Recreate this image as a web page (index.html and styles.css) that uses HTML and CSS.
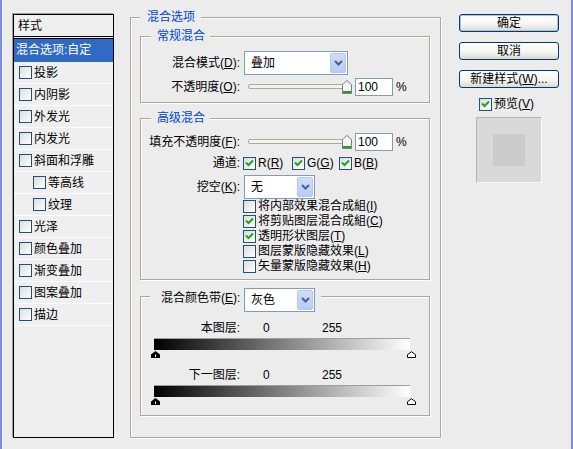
FILE: index.html
```html
<!DOCTYPE html>
<html lang="zh-CN">
<head>
<meta charset="utf-8">
<title>图层样式</title>
<link rel="stylesheet" href="styles.css">
</head>
<body>
<div class="dialog">
  <div class="styles-panel">
    <div class="sp-head">样式</div>
    <div class="sp-item selected">混合选项:自定</div>
    <div class="sp-item"><span class="cb"></span>投影</div>
    <div class="sp-item"><span class="cb"></span>内阴影</div>
    <div class="sp-item"><span class="cb"></span>外发光</div>
    <div class="sp-item"><span class="cb"></span>内发光</div>
    <div class="sp-item"><span class="cb"></span>斜面和浮雕</div>
    <div class="sp-item sub"><span class="cb"></span>等高线</div>
    <div class="sp-item sub"><span class="cb"></span>纹理</div>
    <div class="sp-item"><span class="cb"></span>光泽</div>
    <div class="sp-item"><span class="cb"></span>颜色叠加</div>
    <div class="sp-item"><span class="cb"></span>渐变叠加</div>
    <div class="sp-item"><span class="cb"></span>图案叠加</div>
    <div class="sp-item"><span class="cb"></span>描边</div>
  </div>

  <fieldset class="grp main">
    <legend>混合选项</legend>

    <fieldset class="grp inner g-normal">
      <legend>常规混合</legend>
      <div class="row r-mode">
        <span class="lbl">混合模式(<u>D</u>):</span>
        <div class="combo w-mode"><span class="combo-val">叠加</span><span class="combo-btn"><svg width="9" height="6" viewBox="0 0 9 6"><path d="M1 1 L4.5 4.5 L8 1" fill="none" stroke="#4d6185" stroke-width="2"/></svg></span></div>
      </div>
      <div class="row r-slide">
        <span class="lbl">不透明度(<u>O</u>):</span>
        <div class="slider"><div class="track"></div><svg class="thumb" width="10" height="14" viewBox="0 0 10 14"><path d="M0.5 4.5 L5 0.5 L9.5 4.5 V13.5 H0.5 Z" fill="#f6f6f2" stroke="#7c7c7c"/><path d="M1 11.5 H9 M1 12.5 H9" stroke="#21a121"/></svg></div>
        <span class="num">100</span><span class="pct">%</span>
      </div>
    </fieldset>

    <fieldset class="grp inner g-adv">
      <legend>高级混合</legend>
      <div class="row r-fill">
        <span class="lbl">填充不透明度(<u>F</u>):</span>
        <div class="slider"><div class="track"></div><svg class="thumb" width="10" height="14" viewBox="0 0 10 14"><path d="M0.5 4.5 L5 0.5 L9.5 4.5 V13.5 H0.5 Z" fill="#f6f6f2" stroke="#7c7c7c"/><path d="M1 11.5 H9 M1 12.5 H9" stroke="#21a121"/></svg></div>
        <span class="num">100</span><span class="pct">%</span>
      </div>
      <div class="row r-chan">
        <span class="lbl">通道:</span>
        <span class="chk ch-r"><span class="cb"><svg width="11" height="11" viewBox="0 0 11 11"><path d="M2 4.5 L4.5 7 L9 2.5" fill="none" stroke="#21a121" stroke-width="2"/></svg></span>R(<u>R</u>)</span>
        <span class="chk ch-g"><span class="cb"><svg width="11" height="11" viewBox="0 0 11 11"><path d="M2 4.5 L4.5 7 L9 2.5" fill="none" stroke="#21a121" stroke-width="2"/></svg></span>G(<u>G</u>)</span>
        <span class="chk ch-b"><span class="cb"><svg width="11" height="11" viewBox="0 0 11 11"><path d="M2 4.5 L4.5 7 L9 2.5" fill="none" stroke="#21a121" stroke-width="2"/></svg></span>B(<u>B</u>)</span>
      </div>
      <div class="row r-knock">
        <span class="lbl">挖空(<u>K</u>):</span>
        <div class="combo w-small"><span class="combo-val">无</span><span class="combo-btn"><svg width="9" height="6" viewBox="0 0 9 6"><path d="M1 1 L4.5 4.5 L8 1" fill="none" stroke="#4d6185" stroke-width="2"/></svg></span></div>
      </div>
      <div class="cblist">
        <div class="chk-row"><span class="cb"></span>将内部效果混合成組(<u>I</u>)</div>
        <div class="chk-row"><span class="cb"><svg width="11" height="11" viewBox="0 0 11 11"><path d="M2 4.5 L4.5 7 L9 2.5" fill="none" stroke="#21a121" stroke-width="2"/></svg></span>将剪贴图层混合成組(<u>C</u>)</div>
        <div class="chk-row"><span class="cb"><svg width="11" height="11" viewBox="0 0 11 11"><path d="M2 4.5 L4.5 7 L9 2.5" fill="none" stroke="#21a121" stroke-width="2"/></svg></span>透明形状图层(<u>T</u>)</div>
        <div class="chk-row"><span class="cb"></span>图层蒙版隐藏效果(<u>L</u>)</div>
        <div class="chk-row"><span class="cb"></span>矢量蒙版隐藏效果(<u>H</u>)</div>
      </div>
    </fieldset>

    <fieldset class="grp inner g-band">
      <legend><div class="lg-band"><span class="lg-lbl">混合颜色带(<u>E</u>):</span><div class="combo w-small"><span class="combo-val">灰色</span><span class="combo-btn"><svg width="9" height="6" viewBox="0 0 9 6"><path d="M1 1 L4.5 4.5 L8 1" fill="none" stroke="#4d6185" stroke-width="2"/></svg></span></div></div></legend>
      <div class="row r-layer first">
        <span class="lbl">本图层:</span><span class="v0">0</span><span class="v1">255</span>
      </div>
      <div class="gbar"></div>
      <div class="markers">
        <svg width="9" height="7" viewBox="0 0 9 7"><path d="M4.5 0 L9 3.5 V7 H0 V3.5 Z" fill="#000"/><path d="M4.5 3.5 V6" stroke="#fff"/></svg>
        <svg width="9" height="7" viewBox="0 0 9 7"><path d="M4.5 0.7 L8.5 3.7 V6.5 H0.5 V3.7 Z" fill="#fff" stroke="#000"/></svg>
      </div>
      <div class="row r-layer">
        <span class="lbl">下一图层:</span><span class="v0">0</span><span class="v1">255</span>
      </div>
      <div class="gbar"></div>
      <div class="markers">
        <svg width="9" height="7" viewBox="0 0 9 7"><path d="M4.5 0 L9 3.5 V7 H0 V3.5 Z" fill="#000"/><path d="M4.5 3.5 V6" stroke="#fff"/></svg>
        <svg width="9" height="7" viewBox="0 0 9 7"><path d="M4.5 0.7 L8.5 3.7 V6.5 H0.5 V3.7 Z" fill="#fff" stroke="#000"/></svg>
      </div>
    </fieldset>
  </fieldset>

  <div class="side">
    <div class="btn default">确定</div>
    <div class="btn">取消</div>
    <div class="btn last">新建样式(<u>W</u>)...</div>
    <div class="preview-row"><span class="cb"><svg width="11" height="11" viewBox="0 0 11 11"><path d="M2 4.5 L4.5 7 L9 2.5" fill="none" stroke="#21a121" stroke-width="2"/></svg></span>预览(<u>V</u>)</div>
    <div class="preview"><div class="preview-inner"></div></div>
  </div>
</div>
</body>
</html>
```

FILE: styles.css
```css
* { box-sizing: border-box; }
html, body { margin: 0; padding: 0; }
body {
  width: 573px;
  height: 449px;
  overflow: hidden;
  background: #ececec;
  border-left: 2px solid #7d8cdd;
  border-right: 2px solid #7d8cdd;
  font-family: "Liberation Sans", "Noto Sans CJK SC", sans-serif;
  font-size: 12px;
  line-height: 14px;
  color: #000;
}
u { text-decoration: underline; text-underline-offset: 1px; }

.dialog { display: flex; align-items: flex-start; }

/* left styles list */
.styles-panel {
  margin: 14px 0 0 11px;
  width: 101px;
  height: 424px;
  border: 1px solid #000;
  box-shadow: -1px -1px 0 #a0a0a0;
  background: #efefef;
}
.sp-head {
  height: 24px;
  line-height: 22px;
  padding-left: 4px;
  border-bottom: 3px double #000;
}
.sp-item {
  display: flex;
  align-items: center;
  height: 22px;
  line-height: 22px;
  padding-left: 5px;
  border-bottom: 1px solid #fff;
  white-space: nowrap;
}
.sp-item.selected {
  height: 23px;
  padding-left: 2px;
  background: #316ac5;
  color: #fff;
  border-bottom-color: #316ac5;
}
.sp-item.sub { padding-left: 19px; }

/* checkbox */
.cb {
  display: inline-flex;
  align-items: center;
  justify-content: center;
  width: 13px;
  height: 13px;
  flex-shrink: 0;
  border: 1px solid #1c5180;
  background: linear-gradient(135deg, #dcdcd7, #ffffff);
  margin-right: 2px;
}
.cb svg { display: block; }

/* group boxes */
fieldset {
  margin: 0;
  padding: 0;
  min-width: 0;
  border: 1px solid #aca899;
  box-shadow: inset 1px 1px 0 #fff, 1px 1px 0 #fff;
}
legend {
  padding: 0;
  font-size: 12px;
  line-height: 14px;
  color: #0046d5;
  background: #ececec;
}
.main {
  margin: 10px 0 0 16px;
  width: 311px;
  padding: 0 10px 21px 9px;
}
.main > legend { margin-left: 0; padding: 0 6px 0 7px; }
.inner { width: 290px; }
.inner > legend { margin-left: 10px; padding: 0 5px 0 6px; }
.g-normal { margin-top: 5px; padding-bottom: 6px; }
.g-adv { margin-top: 8px; padding-bottom: 5px; }
.g-band { margin-top: 8px; padding-bottom: 10px; }
.g-band > legend { margin-left: 9px; padding: 0 6px 0 11px; color: #000; }

.row { display: flex; align-items: center; white-space: nowrap; }
.lbl { width: 99px; flex-shrink: 0; text-align: right; }

.r-mode { margin-top: 8px; height: 24px; }
.r-slide { margin-top: 3px; height: 18px; }
.r-fill { margin-top: 8px; height: 18px; }
.r-chan { margin-top: 5px; height: 15px; line-height: 15px; }
.r-knock { margin-top: 4px; height: 24px; }

/* combo box */
.combo {
  display: flex;
  height: 24px;
  margin-left: 4px;
  border: 1px solid #7f9db9;
  background: #fff;
  flex-shrink: 0;
}
.w-mode { width: 104px; }
.w-small { width: 71px; }
.combo-val {
  flex: 1;
  padding-left: 6px;
  line-height: 23px;
  color: #000;
}
.combo-btn {
  width: 16px;
  margin: 1px 1px 1px 0;
  display: flex;
  align-items: center;
  justify-content: center;
  border: 1px solid #b5c8f4;
  border-radius: 2px;
  background: linear-gradient(#cfdcfc, #b7cbf8);
}

/* slider */
.slider {
  position: relative;
  width: 103px;
  height: 18px;
  margin-left: 8px;
  flex-shrink: 0;
}
.track {
  width: 98px;
  height: 5px;
  margin-top: 6px;
  border: 1px solid #aaa9a0;
  border-radius: 2px;
  background: #f3f2ec;
}
.thumb { position: absolute; left: 94px; top: 2px; display: block; }
.num {
  width: 38px;
  height: 18px;
  margin-left: 4px;
  padding-left: 2px;
  line-height: 17px;
  border: 1px solid #7f9db9;
  background: #fff;
}
.pct { margin-left: 3px; }

/* channels */
.chk { display: inline-flex; align-items: center; }
.ch-r { margin-left: 3px; width: 49px; }
.ch-g { width: 47px; }

.cblist { margin-left: 102px; }
.chk-row {
  display: flex;
  align-items: center;
  height: 15px;
  line-height: 15px;
  white-space: nowrap;
}

/* blend band */
.lg-band { display: flex; align-items: flex-start; height: 16px; }
.lg-lbl { width: 83px; line-height: 21px; white-space: nowrap; }
.lg-band .combo { margin-left: 0; }

.r-layer { margin-top: 10px; height: 14px; line-height: 15px; }
.r-layer.first { margin-top: 17px; }
.v0 { width: 59px; margin-left: 23px; }
.gbar {
  margin: 3px 0 0 13px;
  width: 256px;
  height: 12px;
  border-top: 1px solid #a0a0a0;
  background: linear-gradient(to right, #000, #fff);
}
.markers {
  display: flex;
  justify-content: space-between;
  margin: 1px 0 0 10px;
  width: 265px;
  height: 7px;
}
.markers svg { display: block; }

/* right column */
.side {
  margin: 14px 0 0 18px;
  width: 100px;
  display: flex;
  flex-direction: column;
}
.btn {
  height: 18px;
  margin-bottom: 10px;
  border: 1px solid #003c74;
  border-radius: 3px;
  background: linear-gradient(#ffffff, #f4f4f0 60%, #dcd8cc);
  text-align: center;
  line-height: 17px;
  white-space: nowrap;
}
.btn.default { box-shadow: inset 0 0 0 1px #a9bfee; }
.btn.last { margin-bottom: 9px; }
.preview-row {
  display: flex;
  align-items: center;
  height: 14px;
  line-height: 15px;
  margin-left: 20px;
  white-space: nowrap;
}
.preview {
  margin: 6px 0 0 17px;
  width: 66px;
  height: 66px;
  padding: 16px;
  border: 1px solid;
  border-color: #b4b4b4 #fafafa #fafafa #b4b4b4;
  background: #d9d9d9;
}
.preview-inner { width: 32px; height: 32px; background: #cbcbcb; }
```
